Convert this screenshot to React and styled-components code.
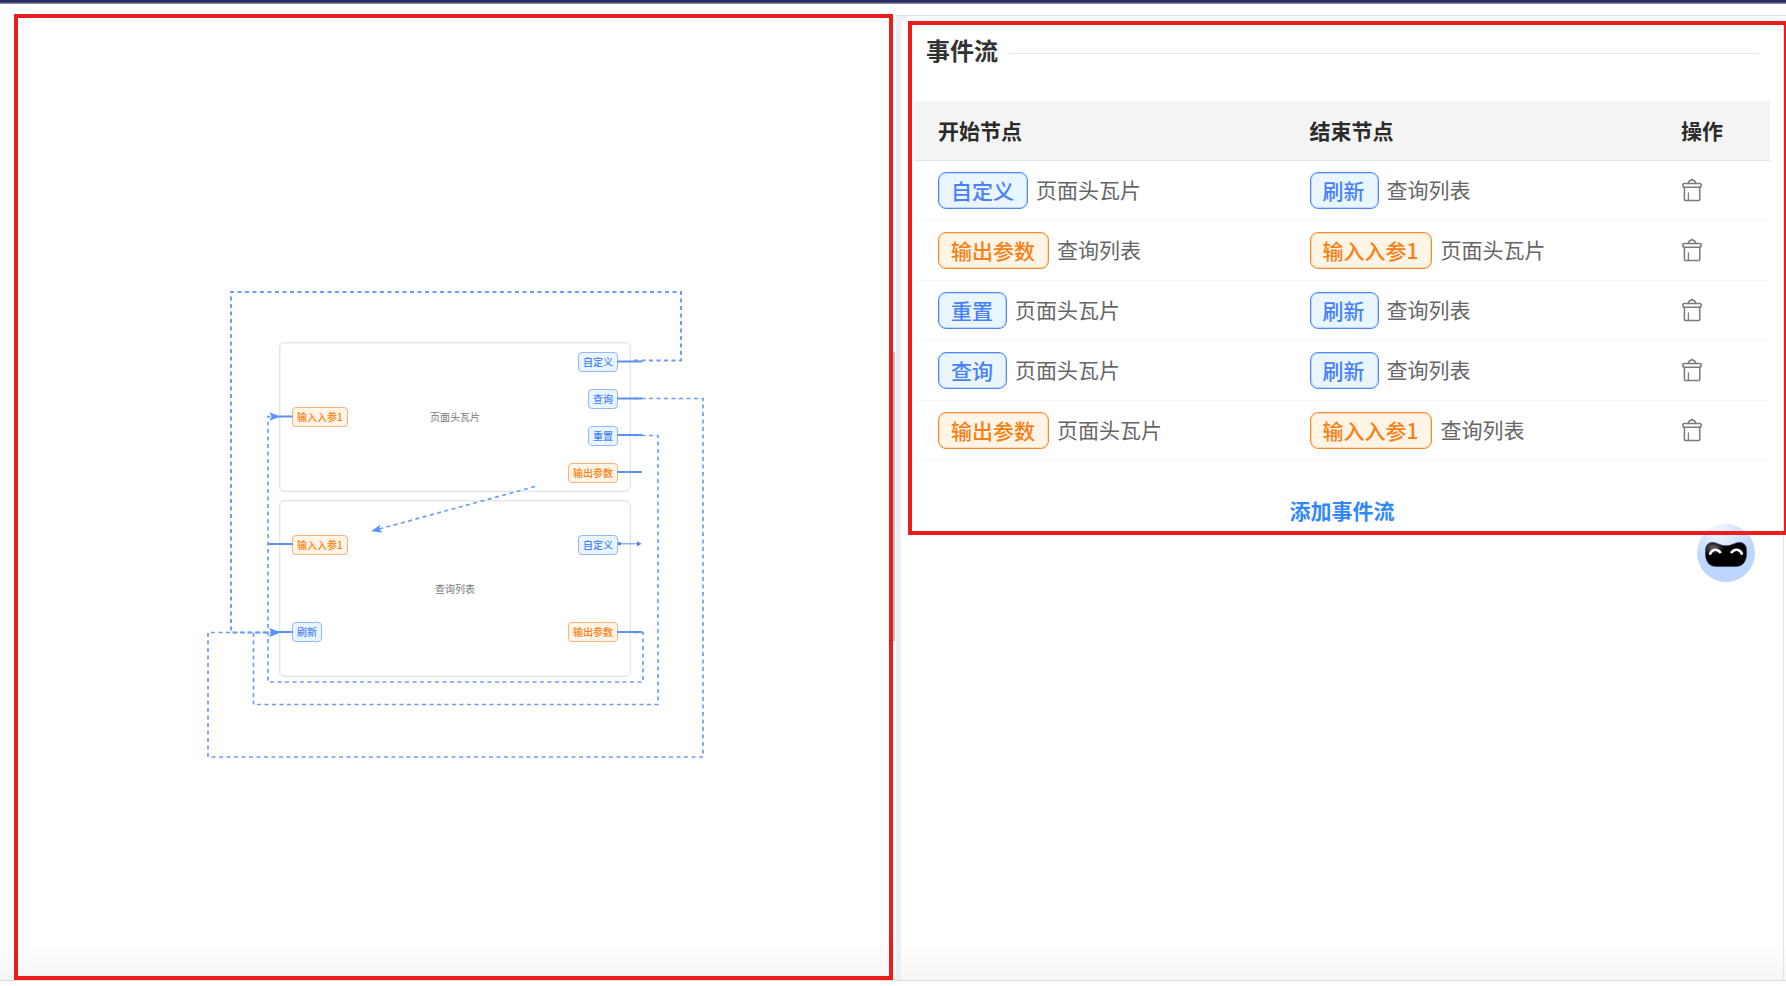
import React, { useState } from 'react';
import styled, { createGlobalStyle, css } from 'styled-components';


const initialFlows = [
  { id: 1, start: { tag: '自定义', type: 'event', name: '页面头瓦片' }, end: { tag: '刷新', type: 'event', name: '查询列表' } },
  { id: 2, start: { tag: '输出参数', type: 'param', name: '查询列表' }, end: { tag: '输入入参1', type: 'param', name: '页面头瓦片' } },
  { id: 3, start: { tag: '重置', type: 'event', name: '页面头瓦片' }, end: { tag: '刷新', type: 'event', name: '查询列表' } },
  { id: 4, start: { tag: '查询', type: 'event', name: '页面头瓦片' }, end: { tag: '刷新', type: 'event', name: '查询列表' } },
  { id: 5, start: { tag: '输出参数', type: 'param', name: '页面头瓦片' }, end: { tag: '输入入参1', type: 'param', name: '查询列表' } },
]

const nodes = [
  {
    name: '页面头瓦片',
    height: 150,
    inputs: [{ tag: '输入入参1', type: 'param' }],
    outputs: [
      { tag: '自定义', type: 'event' },
      { tag: '查询', type: 'event' },
      { tag: '重置', type: 'event' },
      { tag: '输出参数', type: 'param' },
    ],
  },
  {
    name: '查询列表',
    height: 177,
    inputs: [
      { tag: '输入入参1', type: 'param' },
      { tag: '刷新', type: 'event' },
    ],
    outputs: [
      { tag: '自定义', type: 'event' },
      { tag: '输出参数', type: 'param' },
    ],
  },
]

function TrashIcon() {
  return (
    <svg width="20" height="24" viewBox="0 0 20 24" fill="none" stroke="#7a7a7a" strokeWidth="1.5" strokeLinejoin="round" strokeLinecap="round">
      <path d="M6.2 5.4L7.6 2.6H8.8L9.4 1.6H10.6L11.2 2.6H12.4L13.8 5.4" />
      <rect x="0.9" y="5.6" width="18.2" height="3.6" rx="1.2" />
      <path d="M2.4 9.2V21.2A1.4 1.4 0 0 0 3.8 22.6H16.4A1.4 1.4 0 0 0 17.8 21.2V9.2" />
      <path d="M6.4 15V22" strokeWidth="1.3" />
    </svg>
  )
}

function BotFace() {
  return (
    <svg width="58" height="58" viewBox="0 0 58 58">
      <defs>
        <radialGradient id="head" cx="0.38" cy="0.14" r="0.6">
          <stop offset="0" stopColor="#f3f8ff" />
          <stop offset="0.45" stopColor="#d8e7fe" />
          <stop offset="1" stopColor="#bdd6fd" />
        </radialGradient>
        <radialGradient id="visor" cx="0.18" cy="0.22" r="0.3">
          <stop offset="0" stopColor="#6a6265" />
          <stop offset="1" stopColor="#000" />
        </radialGradient>
      </defs>
      <circle cx="29" cy="29" r="29" fill="url(#head)" />
      <path
        d="M8.6 25C9 20 13 17.4 18 18.8C22 20 25 21.8 29 21.8C33 21.8 36 20 40 18.8C45 17.4 49 20 49.4 25C49.8 29.5 49.6 33 48.4 36C46.8 40.4 43.6 42.4 39 42.4H19C14.4 42.4 11.2 40.4 9.6 36C8.4 33 8.2 29.5 8.6 25Z"
        fill="url(#visor)"
        stroke="#26365e"
        strokeWidth="0.6"
      />
      <g fill="none" stroke="#fff" strokeWidth="2.6">
        <path d="M12.8 30.6C14.6 25.2 20.2 23.8 23.8 29" />
        <path d="M34 29C37.6 23.8 43.4 25.2 45.2 30.6" />
      </g>
    </svg>
  )
}

function FlowLines() {
  return (
    <Lines viewBox="0 0 505 526" aria-hidden="true">
      <defs>
        <marker id="arrow" markerUnits="userSpaceOnUse" markerWidth="12" markerHeight="10" refX="6" refY="5" orient="auto">
          <path d="M0.5 0.8L11 5L0.5 9.2L2.6 5Z" fill="#5b93fd" />
        </marker>
      </defs>
      <g fill="none" stroke="#6c9dfe" strokeDasharray="4 3.5">
        <path d="M433 126.5H480V58H30V398.5H74" strokeWidth="2" markerEnd="url(#arrow)" />
        <path d="M433 164.5H502V523H7V398.5H74" strokeWidth="1.7" markerEnd="url(#arrow)" />
        <path d="M433 201.5H457V470.5H52.5V398.5H74" strokeWidth="1.7" markerEnd="url(#arrow)" />
        <path d="M433 398.5H442V448H67V182.5H74" strokeWidth="1.7" markerEnd="url(#arrow)" />
        <path d="M334 252.5L175 295.9" strokeWidth="1.7" markerEnd="url(#arrow)" />
      </g>
      <g stroke="#5c90fa" strokeWidth="1.8">
        <path d="M416 127.5H441M416 164.5H441M416 201H441M416 238H441M416 398H441" />
        <path d="M76 182.5H92M67 310H92M76 398H92" />
        <path d="M418 309.8H438" strokeWidth="1" />
      </g>
      <circle cx="418.5" cy="309.8" r="1.8" fill="#4a80f5" />
      <path d="M436 307.2L440.5 309.8L436 312.4Z" fill="#4a80f5" />
    </Lines>
  )
}

function App() {
  const [flows, setFlows] = useState(initialFlows)

  const removeFlow = (id) => {
    setFlows(flows.filter(flow => flow.id !== id))
  }

  const addFlow = () => {
    setFlows([...flows, { ...initialFlows[0], id: Date.now() }])
  }

  return (
    <>
      <GlobalStyle />
      <Page>
        <TopBar />
        <Workspace>
          <CanvasPanel>
            <Stage>
              {nodes.map(node =>
                <Node key={node.name} $height={node.height}>
                  <Ports>
                    {node.inputs.map(port => <PortTag key={port.tag} $type={port.type}>{port.tag}</PortTag>)}
                  </Ports>
                  <NodeName>{node.name}</NodeName>
                  <Ports $right>
                    {node.outputs.map(port => <PortTag key={port.tag} $type={port.type}>{port.tag}</PortTag>)}
                  </Ports>
                </Node>
              )}
              <FlowLines />
            </Stage>
          </CanvasPanel>
          <Side>
            <ScrollThumb />
            <SideCard>
              <FlowBox>
                <FlowHeader>
                  <FlowTitle>事件流</FlowTitle>
                  <FlowRule />
                </FlowHeader>
                <FlowTable>
                  <thead>
                    <tr>
                      <HeadCell $width="43.4%">开始节点</HeadCell>
                      <HeadCell $width="43.4%">结束节点</HeadCell>
                      <HeadCell $width="13.2%">操作</HeadCell>
                    </tr>
                  </thead>
                  <tbody>
                    {flows.map(flow =>
                      <tr key={flow.id}>
                        <Cell>
                          <CellContent>
                            <Tag $type={flow.start.type}>{flow.start.tag}</Tag>
                            {flow.start.name}
                          </CellContent>
                        </Cell>
                        <Cell>
                          <CellContent>
                            <Tag $type={flow.end.type}>{flow.end.tag}</Tag>
                            {flow.end.name}
                          </CellContent>
                        </Cell>
                        <Cell>
                          <DeleteButton type="button" aria-label="删除" onClick={() => removeFlow(flow.id)}>
                            <TrashIcon />
                          </DeleteButton>
                        </Cell>
                      </tr>
                    )}
                  </tbody>
                </FlowTable>
                <AddButton type="button" onClick={addFlow}>添加事件流</AddButton>
              </FlowBox>
            </SideCard>
            <BotButton type="button" aria-label="助手">
              <BotFace />
            </BotButton>
          </Side>
        </Workspace>
      </Page>
    </>
  )
}

export default App


const GlobalStyle = createGlobalStyle`
    * {
        box-sizing: border-box;
    }
    body {
        margin: 0;
        background-color: #fff;
        color: #666;
        font-family: "Noto Sans CJK SC", "Noto Sans", sans-serif;
        font-size: 21px;
        overflow-x: hidden;
    }
    button {
        font-family: inherit;
        border: none;
        background: none;
        padding: 0;
        cursor: pointer;
    }
`

const tagColors = css`
    color: ${({ $type }) => $type === 'param' ? '#fa7f14' : '#4780fb'};
    background-color: ${({ $type }) => $type === 'param' ? '#fff5e6' : '#eaf6ff'};
    font-weight: 500;
`

const Page = styled.div`
    min-height: 100vh;
    display: flex;
    flex-direction: column;
    padding-bottom: 5px;
    overflow: hidden;
`

const TopBar = styled.header`
    height: 4px;
    background: linear-gradient(#2b2d5e 2px, #a9abc4 4px);
`

const Workspace = styled.main`
    flex: 1;
    display: grid;
    grid-template-columns: 1fr 1fr;
    padding-top: 10px;
    background: linear-gradient(to top, #f6f6f6, #fff 40px);
    border-bottom: 1px solid #d9dadc;
`

const CanvasPanel = styled.section`
    margin-left: 14px;
    border: 4px solid #ec1c1c;
    display: flex;
    align-items: center;
    justify-content: center;
`

const Stage = styled.div`
    position: relative;
    width: 505px;
    height: 526px;
    padding: 108px 75px 0 78px;
    display: flex;
    flex-direction: column;
    gap: 8px;
`

const Lines = styled.svg`
    position: absolute;
    inset: 0;
    width: 100%;
    height: 100%;
    overflow: visible;
`

const Node = styled.div`
    height: ${({ $height }) => $height}px;
    display: grid;
    grid-template-columns: 1fr auto 1fr;
    padding: 0 12px;
    border: 1px solid #e6e6e6;
    border-radius: 5px;
    box-shadow: inset 0 0 0 1px #f4f4f4;
`

const Ports = styled.div`
    display: flex;
    flex-direction: column;
    justify-content: space-around;
    align-items: ${({ $right }) => $right ? 'flex-end' : 'flex-start'};
`

const PortTag = styled.span`
    ${tagColors}
    height: 20px;
    padding: 0 4px;
    border: 1px solid ${({ $type }) => $type === 'param' ? '#fbb27a' : '#94b7fd'};
    border-radius: 4px;
    font-size: 10px;
    line-height: 18px;
    white-space: nowrap;
`

const NodeName = styled.span`
    align-self: center;
    color: #777;
    font-size: 10px;
    line-height: 16px;
`

const Side = styled.aside`
    position: relative;
    display: flex;
    margin-left: 3px;
    padding: 0 2px 0 5px;
    margin-top: 1px;
    border-top: 1px solid #dddfe1;
    background: linear-gradient(to right, #ebeff3 20px, transparent 20px);
`

const ScrollThumb = styled.div`
    position: absolute;
    left: -3px;
    top: 336px;
    width: 2px;
    height: 289px;
    background-color: #bdbdbd;
`

const SideCard = styled.div`
    flex: 1;
    padding: 5px 0 0 7px;
    border-right: 1px solid #e3e3e3;
    border-radius: 10px 10px 0 0;
    background: linear-gradient(to top, #f6f6f6, #fff 40px);
`

const FlowBox = styled.div`
    position: relative;
    z-index: 1;
    margin-right: -5px;
    padding: 0 14px 0 2px;
    border: 4px solid #ec1c1c;
`

const FlowHeader = styled.div`
    display: flex;
    align-items: center;
    gap: 12px;
    height: 50px;
    padding: 0 12px;
    margin-bottom: 26px;
`

const FlowTitle = styled.h2`
    margin: 0;
    color: #333;
    font-size: 24px;
    line-height: 32px;
    font-weight: 700;
`

const FlowRule = styled.div`
    flex: 1;
    height: 1px;
    margin-top: 6px;
    background-color: #e6e6e6;
`

const FlowTable = styled.table`
    width: 100%;
    table-layout: fixed;
    border-collapse: separate;
    border-spacing: 0;
`

const HeadCell = styled.th`
    width: ${({ $width }) => $width};
    height: 60px;
    padding: 0 24px 2px;
    background-color: #f4f4f4;
    border-bottom: 1px solid #e6e6e6;
    color: #2b2b2b;
    font-weight: 700;
    text-align: left;
`

const Cell = styled.td`
    height: 60px;
    padding: 0 24px;
    border-bottom: 1px solid #f5f5f5;
`

const CellContent = styled.div`
    display: flex;
    gap: 8px;
    line-height: 34px;
    white-space: nowrap;
`

const Tag = styled.span`
    ${tagColors}
    height: 37px;
    padding: 0 13px 0 12px;
    border: 1px solid ${({ $type }) => $type === 'param' ? '#fa8a2c' : '#5187fc'};
    border-radius: 8px;
    box-shadow: inset 0 0 0 1px ${({ $type }) => $type === 'param' ? '#fdd9b5' : '#bcd4fe'};
`

const DeleteButton = styled.button`
    display: flex;
    padding: 0 1px 2px;
`

const AddButton = styled.button`
    display: block;
    height: 41px;
    margin: 28px auto 1px;
    color: #2f88ff;
    font-size: 21px;
    font-weight: 700;
`

const BotButton = styled.button`
    position: absolute;
    top: 508px;
    right: 31px;
    display: flex;
`
